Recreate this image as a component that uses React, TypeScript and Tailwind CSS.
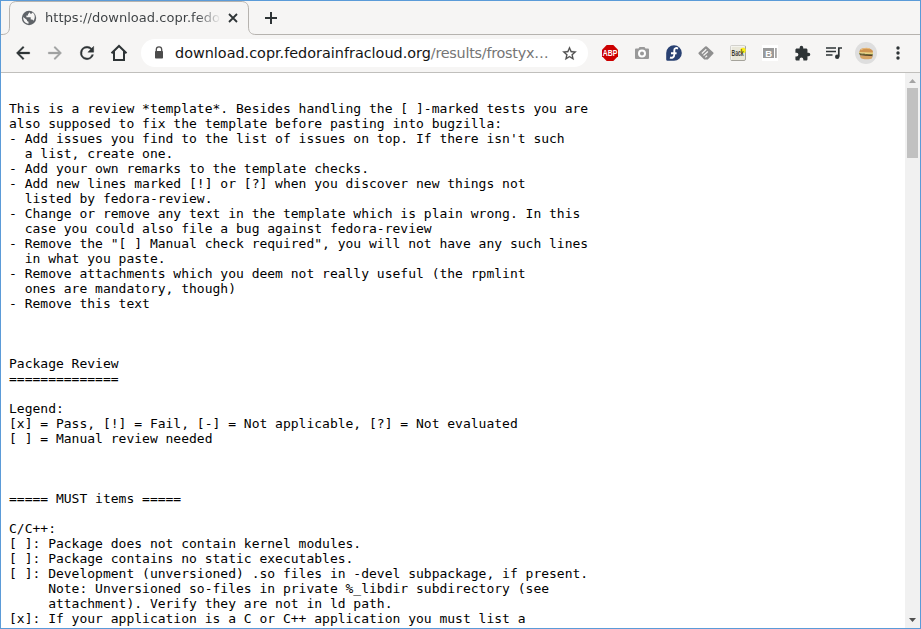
import React from "react";

const report = `
This is a review *template*. Besides handling the [ ]-marked tests you are
also supposed to fix the template before pasting into bugzilla:
- Add issues you find to the list of issues on top. If there isn't such
  a list, create one.
- Add your own remarks to the template checks.
- Add new lines marked [!] or [?] when you discover new things not
  listed by fedora-review.
- Change or remove any text in the template which is plain wrong. In this
  case you could also file a bug against fedora-review
- Remove the "[ ] Manual check required", you will not have any such lines
  in what you paste.
- Remove attachments which you deem not really useful (the rpmlint
  ones are mandatory, though)
- Remove this text



Package Review
==============

Legend:
[x] = Pass, [!] = Fail, [-] = Not applicable, [?] = Not evaluated
[ ] = Manual review needed



===== MUST items =====

C/C++:
[ ]: Package does not contain kernel modules.
[ ]: Package contains no static executables.
[ ]: Development (unversioned) .so files in -devel subpackage, if present.
     Note: Unversioned so-files in private %_libdir subdirectory (see
     attachment). Verify they are not in ld path.
[x]: If your application is a C or C++ application you must list a`;

function Icon({ d, size = 20, className = "" }: { d: string; size?: number; className?: string }) {
  return (
    <svg width={size} height={size} viewBox="0 0 24 24" fill="currentColor" className={"shrink-0 " + className}>
      <path d={d} />
    </svg>
  );
}

function Cell({ children }: { children: React.ReactNode }) {
  return <div className="flex h-8 w-8 shrink-0 items-center justify-center">{children}</div>;
}

function TabStrip() {
  return (
    <div className="relative flex h-[34px] items-center">
      <svg className="absolute left-0 top-0" width="919" height="34" fill="none" stroke="#b6b3af">
        <path d="M0 33.500H1C6 33.500 8.500 31 8.500 26V8C8.500 3 11 .5 16 .5H240C245 .5 247.500 3 247.500 8V26C247.500 31 250 33.500 255 33.500H919" />
      </svg>
      <div className="flex h-full w-[247px] items-center pl-5 text-[#5f6368]">
        <svg width="16" height="16" viewBox="0 0 16 16" className="shrink-0">
          <circle cx="8" cy="8" r="7.200" fill="#5f6368" />
          <path d="M8.700 2.200 7 4.200v1.400H5.400v1.700h4.300v2.200h1.600l1.200 1.200c2-2.700 1.700-6.600-1.100-8.200-.3 1-1.200 1.400-2 1.200Z M2.200 7.100 6 10v1l1.500.7v2C4.300 13.600 2 11 2.200 7.100Z" fill="#f6f5f4" />
        </svg>
        <div className="ml-2 w-[176px] overflow-hidden whitespace-nowrap bg-[linear-gradient(90deg,#3c4043_86%,transparent_100%)] bg-clip-text font-['DejaVu_Sans',sans-serif] text-[13px] leading-5 tracking-[0.040px] text-transparent">
          https://download.copr.fedorainfracloud.org
        </div>
        <svg width="10" height="10" viewBox="0 0 10 10" className="ml-[7px] shrink-0" stroke="#2e3436" strokeWidth="1.800">
          <path d="m1 1 8 8M9 1 1 9" />
        </svg>
      </div>
      <svg width="14" height="14" viewBox="0 0 14 14" className="ml-4" stroke="#2e3436" strokeWidth="2">
        <path d="M7 1v12M1 7h12" />
      </svg>
    </div>
  );
}

function Extensions() {
  return (
    <div className="ml-[6px] flex items-center text-[#2e3436]">
      <Cell>
        <svg width="16" height="16" viewBox="0 0 16 16">
          <path d="M4.700 0h6.600L16 4.700v6.600L11.300 16H4.700L0 11.300V4.700Z" fill="#cc0000" />
          <text transform="translate(8 11.200) scale(.72 1)" textAnchor="middle" fontSize="9.500" fontWeight="700" fill="#fff" fontFamily="Liberation Sans, sans-serif">ABP</text>
        </svg>
      </Cell>
      <Cell>
        <svg width="16" height="16" viewBox="0 0 16 16">
          <path d="M5.500 2h5l1 1.500H14q1 0 1 1V13q0 1-1 1H2q-1 0-1-1V4.500q0-1 1-1h2.500Z" fill="#999" />
          <circle cx="8" cy="8.500" r="3" fill="#999" stroke="#fff" strokeWidth="2" />
        </svg>
      </Cell>
      <Cell>
        <svg width="16" height="16" viewBox="0 0 16 16">
          <path d="M8 .2a7.800 7.800 0 1 1 0 15.600H1.500q-1.300 0-1.300-1.300V8A7.800 7.800 0 0 1 8 .2Z" fill="#294172" />
          <path d="M12 3.600C10 2.400 8.300 3.300 8.300 5.300v4.300c0 2.700-2.200 3.700-4.300 2.900M5 8.200h5.600" fill="none" stroke="#fff" strokeWidth="1.900" />
        </svg>
      </Cell>
      <Cell>
        <svg width="16" height="16" viewBox="0 0 16 16">
          <path d="m7.200 1.500q.8-.7 1.600 0l6.500 5.900q.7.700 0 1.400L9.800 14.500H6.200L.7 8.900Q0 8.200.7 7.500Z" fill="#8f8f8f" />
          <path d="m3.800 8.500 4.500-4.200M5.500 10.500l4.400-4M7.300 12.400l1.800-1.600" stroke="#f6f5f4" strokeWidth="1.200" />
        </svg>
      </Cell>
      <Cell>
        <svg width="16" height="16" viewBox="0 0 16 16">
          <rect x=".5" y=".5" width="15" height="15" rx="1.500" fill="#e9e7da" stroke="#a5a39b" />
          <path d="M1 15V1h14" fill="none" stroke="#fff" />
          <circle cx="13" cy="5.500" r="2.700" fill="#ffed13" />
          <text transform="translate(1.500 11) scale(.56 1)" fontSize="9" fontWeight="700" fill="#3c3c32" fontFamily="Liberation Sans, sans-serif">Back</text>
        </svg>
      </Cell>
      <Cell>
        <svg width="16" height="16" viewBox="0 0 16 16">
          <path fill="#fff" d="M0 0h16v16H0z" />
          <path fill="#999" d="M1 3h11v10H1zM13 3h2v10h-2z" />
          <path fill="none" stroke="#d0d0d0" strokeWidth=".8" d="M14.200 3v10" />
          <text x="3.200" y="11.500" fontSize="9.500" fontWeight="700" fill="#fff" fontFamily="Liberation Sans, sans-serif">B</text>
        </svg>
      </Cell>
      <Cell>
        <Icon size={17} d="M20.500 11H19V7c0-1.100-.9-2-2-2h-4V3.500a2.500 2.500 0 0 0-5 0V5H4c-1.100 0-2 .9-2 2v3.800h1.500a2.700 2.700 0 0 1 0 5.400H2V20c0 1.100.9 2 2 2h3.800v-1.500a2.700 2.700 0 0 1 5.400 0V22H17c1.100 0 2-.9 2-2v-4h1.500a2.500 2.500 0 0 0 0-5Z" />
      </Cell>
      <Cell>
        <svg width="16" height="14" viewBox="0 0 16 14" fill="none" stroke="currentColor">
          <path d="M0 2h10M0 5.500h10M0 9h6.500" strokeWidth="1.700" />
          <path d="M12.800 10.500V2H16" strokeWidth="1.700" />
          <circle cx="11.200" cy="10.700" r="2.200" fill="currentColor" stroke="none" />
        </svg>
      </Cell>
      <Cell>
        <svg width="22" height="22" viewBox="0 0 22 22">
          <circle cx="11" cy="11" r="11" fill="#dedede" />
          <path d="M4.500 9.500c0-5 12.500-4.500 13.500 0l-.5 2-13-1Z" fill="#cf9350" />
          <path d="M6 7.800q4-2.500 9-1" fill="none" stroke="#e8bb7c" strokeWidth="1.200" />
          <path d="m4 10 14 .5v1.800L4 11.500Z" fill="#e8d080" />
          <path d="m4.500 11.500 13 1v2L5 13.500Z" fill="#5c3a24" />
          <path d="m4 11.500 3 1 2-.5 3 1 3-.5 3 .3" fill="none" stroke="#71803a" strokeWidth=".8" />
          <path d="m5 13.500 12.500.8c0 3-2 3.200-6.500 2.900-4 0-6-.7-6-3.700Z" fill="#d6a565" />
        </svg>
      </Cell>
      <Cell>
        <svg width="4" height="14" viewBox="0 0 4 14" fill="currentColor">
          <circle cx="2" cy="2" r="1.700" /><circle cx="2" cy="7" r="1.700" /><circle cx="2" cy="12" r="1.700" />
        </svg>
      </Cell>
    </div>
  );
}

function Toolbar() {
  return (
    <div className="flex h-[38px] items-center border-b border-[#c0bfbc] pb-px pl-[6px] text-[#2e3436]">
      <Cell><Icon size={20} d="M20 10.900H7.830l5.590-5.490L12 4l-8 8 8 8 1.410-1.410L7.830 13.100H20z" className="stroke-current stroke-[0.400px]" /></Cell>
      <Cell><Icon size={20} className="stroke-current stroke-[0.400px] text-[#a0a2a2]" d="m12 4-1.410 1.410L16.170 10.900H4v2.200h12.170l-5.580 5.490L12 20l8-8z" /></Cell>
      <Cell><Icon size={20} className="stroke-current stroke-[0.500px]" d="M17.650 6.350A7.958 7.958 0 0 0 12 4a8 8 0 1 0 7.730 10h-2.080A6 6 0 1 1 12 6c1.660 0 3.140.69 4.220 1.780L13 11h7V4l-2.350 2.350z" /></Cell>
      <Cell>
        <svg width="18" height="18" viewBox="0 0 18 18" fill="none" stroke="currentColor" strokeWidth="2">
          <path d="M1.500 9.300 9 2l7.500 7.300M4 7.500V16h10V7.500" />
        </svg>
      </Cell>
      <div className="ml-[6px] flex h-7 w-[447px] items-center rounded-full bg-white">
        <svg width="10" height="14" viewBox="0 0 10 14" className="ml-[13px] shrink-0">
          <path d="M2.300 6V3.500a2.700 2.700 0 0 1 5.400 0V6" fill="none" stroke="#4c4c4c" strokeWidth="1.300" />
          <rect x="1" y="5" width="8" height="7.500" rx=".8" fill="#4c4c4c" />
        </svg>
        <div className="ml-[11px] w-[384px] whitespace-nowrap font-['DejaVu_Sans',sans-serif] text-[14.400px] leading-6 text-[#141414]">
          download.copr.fedorainfracloud.org<span className="tracking-[-0.260px] text-[#757575]">/results/frostyx…</span>
        </div>
        <Icon size={17} className="ml-[2px] stroke-current stroke-[0.300px] text-[#4c4c4c]" d="m22 9.240-7.190-.62L12 2 9.190 8.630 2 9.240l5.460 4.730L5.820 21 12 17.270 18.180 21l-1.630-7.030L22 9.240zM12 15.400l-3.760 2.270 1-4.280-3.320-2.880 4.380-.38L12 6.100l1.710 4.040 4.380.38-3.320 2.880 1 4.280L12 15.400z" />
      </div>
      <Extensions />
    </div>
  );
}

function Scrollbar() {
  return (
    <div className="flex w-[15px] flex-col items-center bg-[#f1f1f1]">
      <svg width="15" height="15" className="shrink-0"><path d="M4 10h7L7.500 6Z" fill="#a3a3a3" /></svg>
      <div className="h-[70px] w-[11px] shrink-0 bg-[#c1c1c1]" />
      <div className="grow" />
      <svg width="15" height="15" className="shrink-0"><path d="M4 5h7L7.500 9Z" fill="#505050" /></svg>
    </div>
  );
}

export default function App() {
  return (
    <div className="flex h-[629px] w-[921px] flex-col overflow-hidden border border-[#5b9bd8] bg-[#f6f5f4]">
      <TabStrip />
      <Toolbar />
      <div className="flex min-h-0 grow bg-white">
        <pre className="min-w-0 grow overflow-hidden pl-2 pt-[13px] font-['DejaVu_Sans_Mono',monospace] text-[13px] leading-[15px] text-black">{report}</pre>
        <Scrollbar />
      </div>
    </div>
  );
}
